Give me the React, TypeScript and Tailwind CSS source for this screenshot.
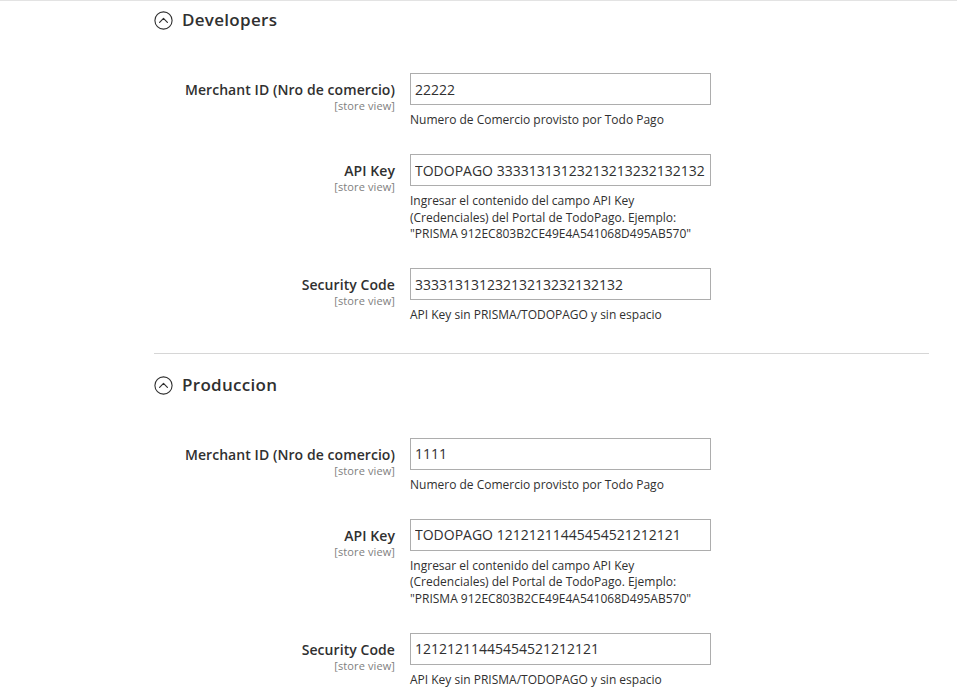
import React from "react";

type Field = { label: string; value: string; note: React.ReactNode };

const ChevronCircle = () => (
  <svg width="19" height="19" viewBox="0 0 19 19" fill="none" className="shrink-0">
    <circle cx="9.5" cy="9.5" r="8.6" stroke="#303030" strokeWidth="1.1" />
    <path d="M5.6 11.3 L9.5 7.4 L13.4 11.3" stroke="#303030" strokeWidth="1.2" strokeLinecap="round" strokeLinejoin="round" />
  </svg>
);

const Row = ({ f, last }: { f: Field; last: boolean }) => (
  <div className={`grid grid-cols-[241px_301px] gap-x-[15px] ${last ? "" : "mb-[25.5px]"}`}>
    <div className="flex flex-col items-end pt-[8px]">
      <span className="text-[14px] leading-[18px] font-semibold text-[#303030] tracking-[0.07px]">{f.label}</span>
      <span className="text-[11px] leading-[14px] text-[#808080] tracking-[0.1px]">[store view]</span>
    </div>
    <div className="flex flex-col">
      <input
        readOnly
        value={f.value}
        className="h-[32px] w-[301px] border border-[#adadad] bg-white px-[4px] text-[14px] text-[#303030] outline-none"
      />
      <div className="mt-[7px] text-[12px] leading-[16.5px] text-[#303030]">{f.note}</div>
    </div>
  </div>
);

const apiNote = (
  <>
    Ingresar el contenido del campo API Key
    <br />
    (Credenciales) del Portal de TodoPago. Ejemplo:
    <br />
    "PRISMA 912EC803B2CE49E4A541068D495AB570"
  </>
);

const Section = ({ title, fields, gap }: { title: string; fields: Field[]; gap: string }) => (
  <div>
    <div className="flex h-[38px] items-center gap-[9px]">
      <ChevronCircle />
      <span className="text-[17px] font-semibold text-[#303030] tracking-[0.3px]">{title}</span>
    </div>
    <div className={gap}>
      {fields.map((f, i) => (
        <Row key={i} f={f} last={i === fields.length - 1} />
      ))}
    </div>
  </div>
);

export default function App() {
  const dev: Field[] = [
    { label: "Merchant ID (Nro de comercio)", value: "22222", note: "Numero de Comercio provisto por Todo Pago" },
    { label: "API Key", value: "TODOPAGO 33331313123213213232132132", note: apiNote },
    { label: "Security Code", value: "33331313123213213232132132", note: "API Key sin PRISMA/TODOPAGO y sin espacio" },
  ];
  const prod: Field[] = [
    { label: "Merchant ID (Nro de comercio)", value: "1111", note: "Numero de Comercio provisto por Todo Pago" },
    { label: "API Key", value: "TODOPAGO 12121211445454521212121", note: apiNote },
    { label: "Security Code", value: "12121211445454521212121", note: "API Key sin PRISMA/TODOPAGO y sin espacio" },
  ];
  return (
    <div className="min-h-[690px] w-full bg-white font-['Open_Sans',sans-serif] border-t border-[#e3e3e3]">
      <div className="ml-[154px] mr-[28px]">
        <Section title="Developers" fields={dev} gap="mt-[34px]" />
        <div className="h-px bg-[#d6d6d6] mt-[29.5px] mb-[12px]" />
        <Section title="Produccion" fields={prod} gap="mt-[33.5px]" />
      </div>
    </div>
  );
}
